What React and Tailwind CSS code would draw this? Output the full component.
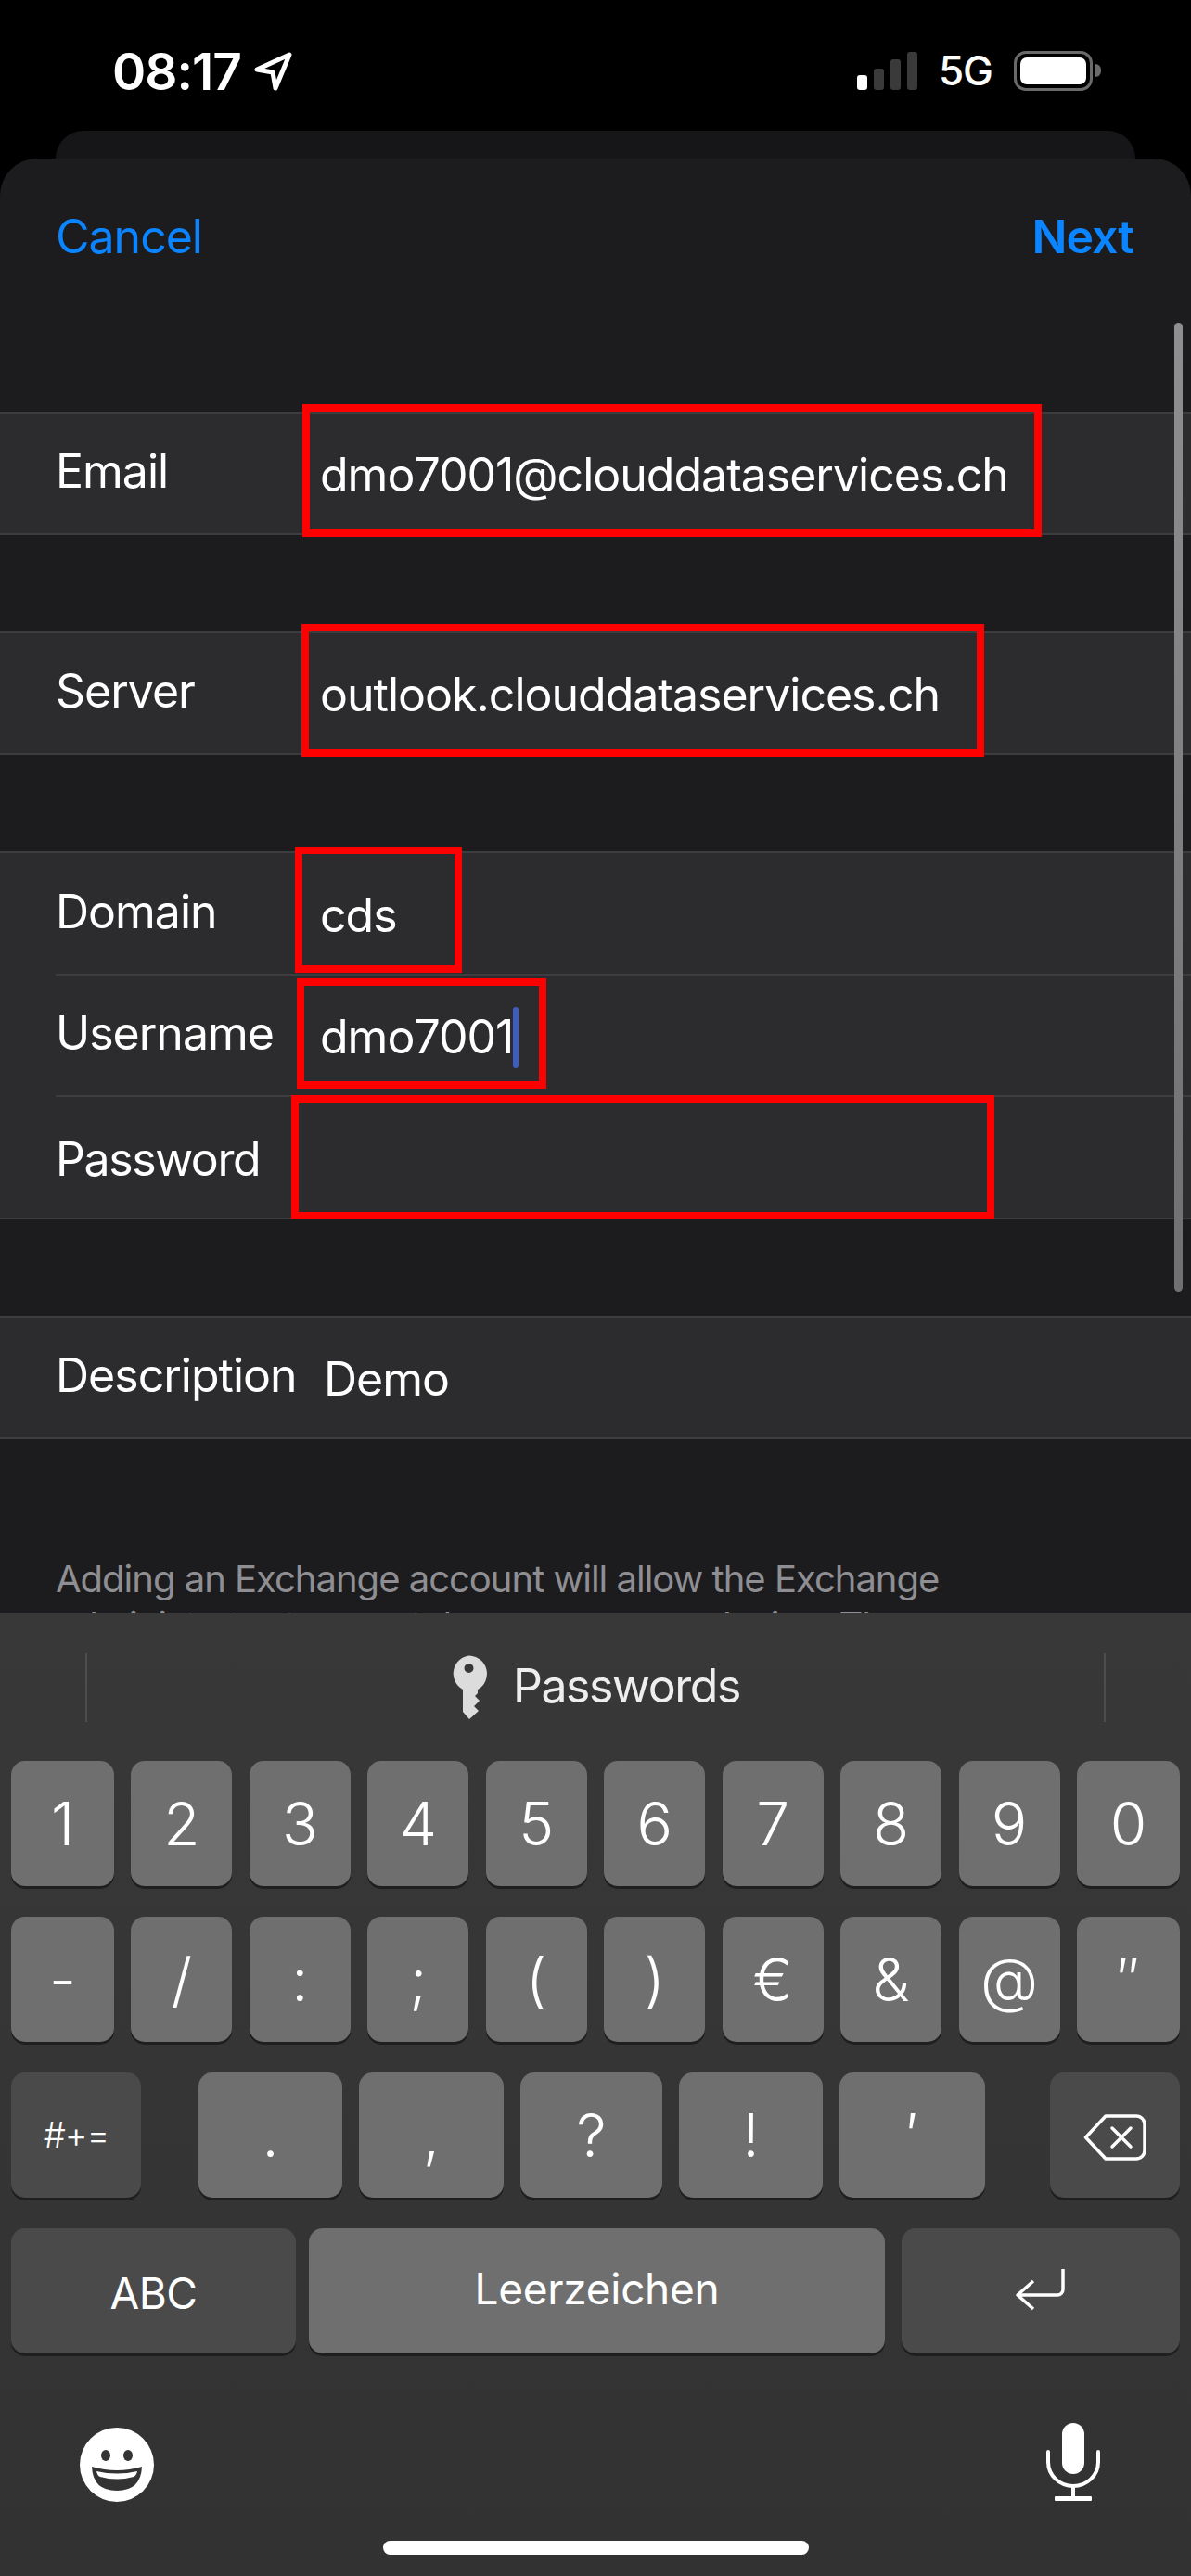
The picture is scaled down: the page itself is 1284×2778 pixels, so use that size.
import React from "react";

const numberKeys = ["1", "2", "3", "4", "5", "6", "7", "8", "9", "0"];
const symbolKeys = ["-", "/", ":", ";", "(", ")", "€", "&", "@", "″"];

const Key = ({ children, className = "" }) => (
  <div
    className={`flex items-center justify-center rounded-[15px] text-white font-light shadow-[0_3px_0_#1f1f1f] ${className}`}
  >
    {children}
  </div>
);

const KeyRow = ({ keys }) => (
  <div className="flex h-[135px] justify-between">
    {keys.map((k, i) => (
      <Key
        key={k}
        className={`bg-[#6f6f6f] text-[64px] ${
          i === 0 || i === keys.length - 1 ? "w-[111px]" : "w-[109px]"
        }`}
      >
        {k}
      </Key>
    ))}
  </div>
);

const Row = ({ label, value, inset, height = "h-[129px]", labelClass = "pb-[4px]", valueClass = "", children }) => (
  <div className={`${height} bg-[#2c2c2e] ${inset ? "pl-[60px]" : ""}`}>
    <div
      className={`flex h-full items-center text-[50px] tracking-[-1px] ${
        inset ? "border-t-2 border-[#3d3d40]" : "pl-[60px]"
      }`}
    >
      <div className={`w-[285px] shrink-0 ${labelClass}`}>{label}</div>
      <div className={`flex items-center pt-[4px] ${valueClass}`}>
        {value}
        {children}
      </div>
    </div>
  </div>
);

const Group = ({ children, className = "mt-[104px]" }) => (
  <div className={`border-y-2 border-[#3d3d40] ${className}`}>{children}</div>
);

const RedBox = ({ className }) => (
  <div className={`absolute border-[8px] border-[#ff0000] ${className}`} />
);

const LocationArrow = () => (
  <svg width="42" height="44" viewBox="0 0 42 44" fill="none">
    <path
      d="M3 20 L38 4 L23 40 L20 23 Z"
      stroke="white"
      strokeWidth="5"
      strokeLinejoin="round"
    />
  </svg>
);

const KeyIcon = () => (
  <svg width="40" height="70" viewBox="0 0 40 70" className="shrink-0">
    <path
      fillRule="evenodd"
      fill="#dcdcdc"
      d="M19.5 0.5a19.5 19.5 0 0 1 9.5 36.5V41l-3 3 5 5-6 6 5 5-10 9-7-8V37A19.5 19.5 0 0 1 19.5 0.5zM19.5 9a5 5 0 1 0 0 10 5 5 0 0 0 0-10z"
    />
  </svg>
);

const BackspaceIcon = () => (
  <svg width="68" height="50" viewBox="0 0 68 50" fill="none">
    <path
      d="M24 2 H57 a9 9 0 0 1 9 9 V39 a9 9 0 0 1-9 9 H24 L2.5 25 Z"
      stroke="white"
      strokeWidth="3.5"
      strokeLinejoin="round"
    />
    <path d="M31 15 L51 35 M51 15 L31 35" stroke="white" strokeWidth="3.5" strokeLinecap="round" />
  </svg>
);

const ReturnIcon = () => (
  <svg width="56" height="46" viewBox="0 0 56 46" fill="none">
    <path d="M52 1 V23 a6 6 0 0 1-6 6 H4" stroke="white" strokeWidth="3.5" />
    <path d="M20 14 L3 29 L20 44" stroke="white" strokeWidth="3.5" strokeLinejoin="round" />
  </svg>
);

const EmojiIcon = () => (
  <svg width="80" height="80" viewBox="0 0 80 80">
    <circle cx="40" cy="40" r="40" fill="white" />
    <ellipse cx="28" cy="30" rx="5" ry="6" fill="#333333" />
    <ellipse cx="52" cy="30" rx="5" ry="6" fill="#333333" />
    <path d="M13 42 Q40 50 67 42 Q66 68 40 68 Q14 68 13 42 Z" fill="#333333" />
    <path d="M18 47 Q40 52 62 47 Q61 52 58 53 Q40 58 22 53 Q19 52 18 47 Z" fill="white" />
  </svg>
);

const MicIcon = () => (
  <svg width="58" height="84" viewBox="0 0 58 84" fill="none">
    <rect x="17" y="0" width="24" height="55" rx="12" fill="white" />
    <path
      d="M2 31 V42 a27 26 0 0 0 54 0 V31"
      stroke="white"
      strokeWidth="4"
      strokeLinecap="round"
    />
    <path d="M29 68 V81" stroke="white" strokeWidth="4" />
    <rect x="9" y="79" width="40" height="5" rx="1" fill="white" />
  </svg>
);

export default function App() {
  return (
    <div className="relative flex h-[2778px] w-[1284px] flex-col overflow-hidden bg-black font-['Inter','Liberation_Sans',sans-serif] text-white">
      {/* status bar */}
      <div className="flex h-[141px] shrink-0 items-start justify-between pl-[121px] pr-[97px] pt-[54px]">
        <div className="flex items-center gap-[14px]">
          <span className="text-[55px] leading-[46px] font-semibold tracking-[-1px]">08:17</span>
          <LocationArrow />
        </div>
        <div className="flex items-center">
          <div className="flex h-[42px] items-end gap-[7px]">
            <div className="h-[16px] w-[11px] rounded-[3px] bg-white" />
            <div className="h-[23px] w-[11px] rounded-[3px] bg-[#3a3a3a]" />
            <div className="h-[33px] w-[11px] rounded-[3px] bg-[#3a3a3a]" />
            <div className="h-[41px] w-[11px] rounded-[3px] bg-[#3a3a3a]" />
          </div>
          <span className="ml-[23px] text-[44px] leading-[44px] font-medium tracking-[-1px]">5G</span>
          <div className="ml-[23px] flex items-center">
            <div className="h-[43px] w-[85px] rounded-[13px] border-[3px] border-[#6a6a6a] p-[4px]">
              <div className="h-full w-full rounded-[7px] bg-white" />
            </div>
            <div className="ml-[3px] h-[14px] w-[6px] rounded-r-full bg-[#6a6a6a]" />
          </div>
        </div>
      </div>

      {/* card behind the sheet */}
      <div className="mx-[60px] h-[30px] shrink-0 rounded-t-[34px] bg-[#161618]" />

      {/* sheet */}
      <div className="relative flex h-[1569px] shrink-0 flex-col overflow-hidden rounded-t-[40px] bg-[#1c1c1e]">
        <div className="flex h-[168px] shrink-0 items-center justify-between pl-[60px] pr-[62px] text-[50px] tracking-[-1px] text-[#0a84ff]">
          <span>Cancel</span>
          <span className="font-semibold">Next</span>
        </div>
        <Group className="mt-[105px]">
          <Row label="Email" value="dmo7001@clouddataservices.ch" />
        </Group>
        <Group>
          <Row label="Server" value="outlook.clouddataservices.ch" />
        </Group>
        <Group>
          <Row label="Domain" value="cds" height="h-[130px]" />
          <Row inset label="Username" value="dmo7001" height="h-[131px]">
            <span className="h-[66px] w-[6px] rounded-full bg-[#3f5dc0]" />
          </Row>
          <Row inset label="Password" value="" height="h-[132px]" labelClass="pt-[4px] tracking-[-1.4px]" />
        </Group>
        <Group>
          <Row label="Description" value="Demo" valueClass="pl-[4px]" />
        </Group>
        <p className="mt-[126px] px-[60px] text-[40px] leading-[50px] tracking-[-1px] text-[#8e8e93]">
          Adding an Exchange account will allow the Exchange administrator to remotely manage your
          device. The
        </p>

        {/* scroll indicator */}
        <div className="absolute right-[9px] top-[177px] h-[1045px] w-[9px] rounded-full bg-linear-to-b from-[#8f8f8f] to-[#707072]" />
      </div>

      {/* keyboard */}
      <div className="flex flex-1 flex-col bg-linear-to-b from-[#383838] to-[#323232]">
        <div className="flex h-[159px] shrink-0 items-center justify-center px-[92px]">
          <div className="flex h-[74px] w-full items-center justify-center gap-[27px] border-x-2 border-[#4d4d4d]">
            <KeyIcon />
            <span className="pb-[4px] text-[50px] leading-none tracking-[-1.4px] text-[#eeeeee]">Passwords</span>
          </div>
        </div>
        <div className="flex flex-col gap-[33px] px-[12px]">
          <KeyRow keys={numberKeys} />
          <KeyRow keys={symbolKeys} />
          <div className="flex h-[135px]">
            <Key className="w-[140px] bg-[#4a4a4a] text-[38px] tracking-[-1px]">#+=</Key>
            <div className="ml-[62px] flex gap-[18px]">
              <Key className="w-[155px] bg-[#6f6f6f] text-[64px]">.</Key>
              <Key className="w-[156px] bg-[#6f6f6f] text-[64px]">,</Key>
              <Key className="w-[153px] bg-[#6f6f6f] text-[64px]">?</Key>
              <Key className="w-[155px] bg-[#6f6f6f] text-[64px]">!</Key>
              <Key className="w-[157px] bg-[#6f6f6f] text-[64px]">′</Key>
            </div>
            <Key className="ml-[70px] w-[140px] bg-[#4a4a4a] pt-[4px]">
              <BackspaceIcon />
            </Key>
          </div>
          <div className="flex h-[135px] gap-[14px]">
            <Key className="w-[307px] bg-[#4a4a4a] pt-[6px] text-[46px] font-normal tracking-[-0.5px]">ABC</Key>
            <Key className="w-[621px] bg-[#6f6f6f] pb-[4px] text-[46px] font-normal tracking-[-0.3px]">Leerzeichen</Key>
            <Key className="ml-[4px] w-[300px] bg-[#4a4a4a] pb-[4px]">
              <ReturnIcon />
            </Key>
          </div>
        </div>
        <div className="mt-[75px] flex items-start justify-between pl-[86px] pr-[98px]">
          <div className="pt-[5px]">
            <EmojiIcon />
          </div>
          <MicIcon />
        </div>
        <div className="mt-[42px] flex justify-center">
          <div className="h-[15px] w-[459px] rounded-full bg-white" />
        </div>
      </div>

      {/* red annotation frames */}
      <RedBox className="left-[326px] top-[436px] h-[143px] w-[797px]" />
      <RedBox className="left-[325px] top-[673px] h-[143px] w-[736px]" />
      <RedBox className="left-[318px] top-[913px] h-[136px] w-[180px]" />
      <RedBox className="left-[320px] top-[1055px] h-[119px] w-[269px]" />
      <RedBox className="left-[314px] top-[1181px] h-[134px] w-[758px]" />
    </div>
  );
}
